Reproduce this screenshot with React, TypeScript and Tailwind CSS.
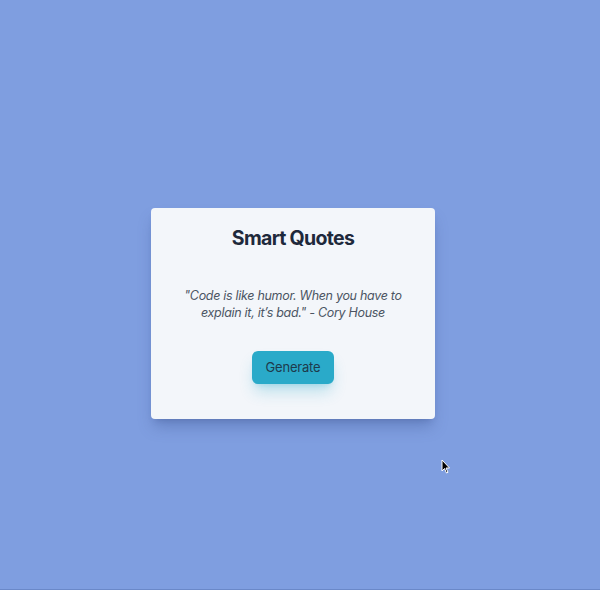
export default function App() {
  return (
    <div
      className="relative h-[590px] w-[600px] overflow-hidden bg-[#7f9ee0] border-b border-[#6a88c8] pt-[208px] pl-[151px]"
      style={{ fontFamily: 'Inter, "Noto Sans", sans-serif' }}
    >
      <div className="w-[284px] h-[211px] rounded bg-[#f3f6fa] shadow-lg shadow-[#3e5590]/40 flex flex-col items-center pt-[18px]">
        <h1 className="text-[19.5px] leading-6 font-bold tracking-[-0.7px] text-[#1e293b]">Smart Quotes</h1>
        <p className="mt-[37px] px-4 text-center text-[12.5px] leading-[17px] italic tracking-[-0.3px] text-[#4b5563]">
          "Code is like humor. When you have to explain it, it’s bad." - Cory House
        </p>
        <button className="mt-[30px] w-[82px] h-[33px] rounded-md bg-[#2aaac9] text-[13px] tracking-[-0.2px] text-[#1e3a4c] shadow-lg shadow-[#2aaac9]/30">
          Generate
        </button>
      </div>
      <svg className="absolute left-[441px] top-[459px]" width="10" height="15" viewBox="0 0 10 15">
        <path d="M1 1 L1 12 L3.5 9.5 L5.5 14 L7 13.3 L5 9 L8.5 9 Z" fill="#000" stroke="#fff" strokeWidth="1" />
      </svg>
    </div>
  );
}
